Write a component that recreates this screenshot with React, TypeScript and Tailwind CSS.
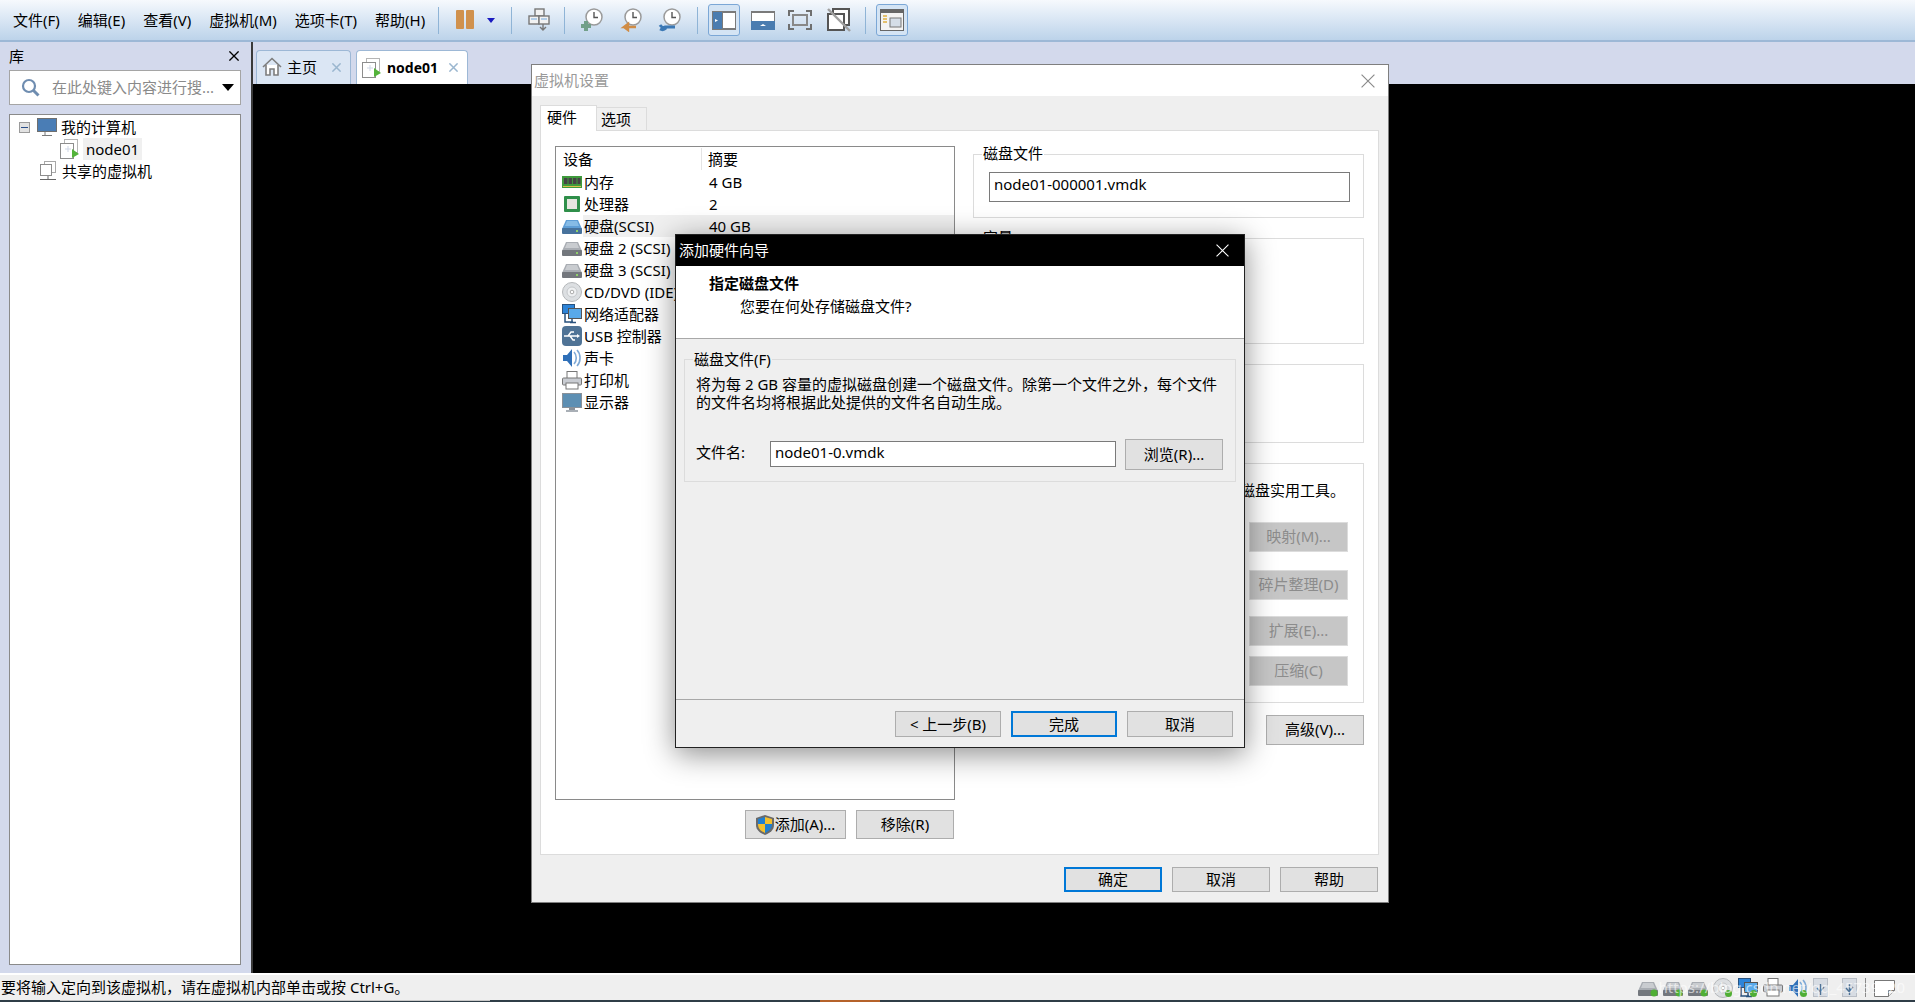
import type { ReactNode } from "react";

const FONT = "font-['Noto_Sans','Noto_Sans_CJK_SC',sans-serif]";

function Sep() {
  return <div className="w-px h-[27px] bg-[#8fb4d6]" />;
}

function Pause() {
  return (
    <svg width="18" height="20" viewBox="0 0 18 20">
      <rect x="0" y="0" width="8" height="19" rx="1" fill="#d0914d" />
      <rect x="10" y="0" width="8" height="19" rx="1" fill="#d0914d" />
    </svg>
  );
}

function SendKeys() {
  return (
    <svg width="22" height="24" viewBox="0 0 22 24" fill="#f2f2f2" stroke="#777" strokeWidth="1.4">
      <rect x="7" y="1" width="9" height="7" />
      <rect x="1" y="8" width="10" height="8" />
      <rect x="11" y="8" width="10" height="8" />
      <path d="M15 16v5M12 19l3 3 3-3" fill="none" />
      <path d="M3 11h6M13 11h6" stroke="#9cc0e4" />
    </svg>
  );
}

function Clock({ kind }: { kind: "add" | "back" | "tool" }) {
  return (
    <svg width="24" height="24" viewBox="0 0 24 24">
      <circle cx="14" cy="9" r="8" fill="#fff" stroke="#9a9a9a" strokeWidth="1.5" />
      <path d="M14 4v5.5h4" fill="none" stroke="#555" strokeWidth="1.4" />
      {kind === "add" && <path d="M6 13v10M1 18h10" stroke="#72a08a" strokeWidth="4" />}
      {kind === "back" && <path d="M17 19H5l4-3v6l-4-3" fill="#d08c45" stroke="#d08c45" strokeWidth="2.4" />}
      {kind === "tool" && <path d="M2 17c2 3 3 3 5 2h10M2 21c2 1 4 1 6-1" fill="none" stroke="#3b78b5" strokeWidth="3" />}
    </svg>
  );
}

function ViewIcon({ kind }: { kind: "side" | "bottom" | "full" | "off" | "tabs" }) {
  if (kind === "side")
    return (
      <svg width="24" height="19" viewBox="0 0 24 19">
        <rect width="24" height="19" fill="#7a7a7a" />
        <rect x="1" y="1" width="9" height="17" fill="#4a7cb0" />
        <rect x="11" y="2" width="12" height="15" fill="#fff" />
        <path d="M3 8l3 1.5L3 11z" fill="#fff" />
      </svg>
    );
  if (kind === "bottom")
    return (
      <svg width="24" height="19" viewBox="0 0 24 19">
        <rect width="24" height="19" fill="#7a7a7a" />
        <rect x="1" y="2" width="22" height="8" fill="#fff" />
        <rect x="0" y="10" width="24" height="9" fill="#4a7cb0" />
        <path d="M9 15l3-2 3 2z" fill="#fff" />
      </svg>
    );
  if (kind === "full")
    return (
      <svg width="24" height="20" viewBox="0 0 24 20" fill="none" stroke="#6f6f6f" strokeWidth="2">
        <rect x="5" y="5" width="14" height="10" stroke="#888" />
        <path d="M1 6V1h5M18 1h5v5M23 14v5h-5M6 19H1v-5" />
      </svg>
    );
  if (kind === "off")
    return (
      <svg width="24" height="24" viewBox="0 0 24 24">
        <rect x="6" y="1" width="16" height="16" fill="#fff" stroke="#555" strokeWidth="2" />
        <rect x="1" y="6" width="16" height="16" fill="#fff" stroke="#555" strokeWidth="2" />
        <path d="M1 1l22 22" stroke="#a0a0a0" strokeWidth="2.4" />
      </svg>
    );
  return (
    <svg width="24" height="22" viewBox="0 0 24 22">
      <rect x="0.5" y="0.5" width="23" height="21" fill="#f3f3f3" stroke="#666" />
      <rect width="24" height="4" fill="#666" />
      <path d="M3 7h4M3 10h4M3 13h4" stroke="#e0b040" strokeWidth="1.4" />
      <rect x="10" y="9" width="11" height="9" fill="#d5dee8" stroke="#777" />
    </svg>
  );
}

function HomeIcon() {
  return (
    <svg width="20" height="20" viewBox="0 0 20 20" fill="#fff" stroke="#7d7d7d" strokeWidth="1.6">
      <path d="M1 10L10 1.5 19 10" fill="none" />
      <path d="M4 8v10h4v-6h4v6h4V8" />
    </svg>
  );
}

function VmIcon() {
  return (
    <svg width="20" height="20" viewBox="0 0 20 20">
      <rect x="4.5" y="0.5" width="13" height="13" fill="#fff" stroke="#b5b5b5" />
      <rect x="0.5" y="4.5" width="13" height="15" fill="#fff" stroke="#8d8d8d" />
      <path d="M5 10h6M8 7v6" stroke="#cfd7e6" />
      <path d="M12 10l7 5-7 4z" fill="#53b33a" />
    </svg>
  );
}

function SharedIcon() {
  return (
    <svg width="20" height="20" viewBox="0 0 20 20">
      <rect x="5.5" y="0.5" width="11" height="11" fill="#fff" stroke="#a8a8a8" />
      <rect x="1.5" y="3.5" width="11" height="11" fill="#fff" stroke="#8d8d8d" />
      <path d="M9 15v3M1 18.5h16" stroke="#666" />
    </svg>
  );
}

function ComputerIcon() {
  return (
    <svg width="20" height="19" viewBox="0 0 20 19">
      <rect x="0.5" y="0.5" width="19" height="13" fill="#4a7db5" stroke="#6f6f6f" />
      <path d="M8 14v3M5 17.5h10" stroke="#7a7a7a" />
    </svg>
  );
}

function DiskIcon({ blue, led }: { blue?: boolean; led?: boolean }) {
  const top = blue ? "#5f9ed6" : "#a9adb3";
  return (
    <svg width="20" height="18" viewBox="0 0 20 18">
      <path d="M4 3h12l4 9H0z" fill={top} />
      <path d="M5 4h10l2 5H3z" fill={blue ? "#86bbe6" : "#c9ccd0"} />
      <rect x="0" y="11" width="20" height="6" rx="1" fill={blue ? "#47729c" : "#73777d"} />
      <rect x="14" y="13" width="2" height="2" fill="#8fd06a" />
      {led && <circle cx="16" cy="14" r="3.5" fill="#4fae35" />}
    </svg>
  );
}

function MemoryIcon() {
  return (
    <svg width="20" height="12" viewBox="0 0 20 12">
      <rect width="20" height="12" fill="#3f9a3c" />
      <rect x="2" y="2" width="3.5" height="6" fill="#444" />
      <rect x="6.5" y="2" width="3.5" height="6" fill="#444" />
      <rect x="11" y="2" width="3.5" height="6" fill="#444" />
      <rect x="15.5" y="2" width="3" height="6" fill="#444" />
      <path d="M1 10.5h18" stroke="#d8c04a" />
    </svg>
  );
}

function CpuIcon() {
  return (
    <svg width="16" height="16" viewBox="0 0 16 16">
      <rect width="16" height="16" rx="1" fill="#2f8f4a" />
      <rect x="3" y="3" width="10" height="10" fill="#e6e6e0" />
    </svg>
  );
}

function CdIcon({ led }: { led?: boolean }) {
  return (
    <svg width="20" height="20" viewBox="0 0 20 20">
      <circle cx="10" cy="10" r="9.5" fill="#dcdfe2" stroke="#b4b7ba" />
      <circle cx="10" cy="10" r="5" fill="#eef0f2" stroke="#c4c7ca" />
      <circle cx="10" cy="10" r="1.8" fill="#fff" stroke="#aaa" />
      {led && <circle cx="15.5" cy="15.5" r="3.5" fill="#4fae35" />}
    </svg>
  );
}

function NetIcon({ led }: { led?: boolean }) {
  return (
    <svg width="20" height="20" viewBox="0 0 20 20">
      <rect x="0.5" y="0.5" width="12" height="9" fill="#2d84d8" stroke="#29527e" />
      <rect x="6.5" y="4.5" width="13" height="10" fill="#58a9ea" stroke="#555" />
      <path d="M3 10v8h8M10 15v3M8 18.5h6" fill="none" stroke="#29527e" strokeWidth="1.5" />
      {led && <circle cx="15.5" cy="15.5" r="3.5" fill="#4fae35" />}
    </svg>
  );
}

function UsbIcon() {
  return (
    <svg width="20" height="20" viewBox="0 0 20 20">
      <rect width="20" height="20" rx="4" fill="#4f7396" />
      <path d="M2 10h14M6 10l3-4h3M8 10l3 4h2" fill="none" stroke="#fff" strokeWidth="1.4" />
      <path d="M15 8l3 2-3 2z" fill="#fff" />
    </svg>
  );
}

function SoundIcon({ led }: { led?: boolean }) {
  return (
    <svg width="20" height="20" viewBox="0 0 20 20">
      <path d="M1 7h4l5-6v18l-5-6H1z" fill="#2f6fb8" />
      <path d="M12 4c3 3 3 9 0 12M15 2c4 4 4 12 0 16" fill="none" stroke="#7fa9d6" strokeWidth="1.6" />
      {led && <circle cx="15.5" cy="15.5" r="3.5" fill="#4fae35" />}
    </svg>
  );
}

function PrinterIcon() {
  return (
    <svg width="20" height="19" viewBox="0 0 20 19">
      <rect x="5" y="0.5" width="10" height="7" fill="#fff" stroke="#777" />
      <rect x="0.5" y="7" width="19" height="7" rx="1" fill="#c9ccd2" stroke="#777" />
      <rect x="4" y="12" width="12" height="6" fill="#fff" stroke="#777" />
    </svg>
  );
}

function DisplayIcon() {
  return (
    <svg width="20" height="19" viewBox="0 0 20 19">
      <rect x="0.5" y="0.5" width="19" height="14" fill="#5d8fb3" stroke="#8a9199" />
      <rect x="7" y="15" width="6" height="2" fill="#8a9199" />
      <rect x="4" y="17" width="12" height="2" fill="#a9afb6" />
    </svg>
  );
}

function UsbStatus() {
  return (
    <svg width="15" height="19" viewBox="0 0 15 19">
      <rect x="0.5" y="0.5" width="14" height="18" fill="#d7dce3" stroke="#b9bec6" />
      <path d="M7.5 6v11M4 10l3.5 4M11 9l-3.5 4" stroke="#4f7396" strokeWidth="1.4" fill="none" />
    </svg>
  );
}

function NoteIcon() {
  return (
    <svg width="21" height="18" viewBox="0 0 21 18">
      <path d="M0.5 1.5h20v10l-6 6h-14z" fill="#fff" stroke="#777" />
      <path d="M14.5 17.5v-6h6" fill="#eee" stroke="#777" />
    </svg>
  );
}

function Shield() {
  return (
    <svg width="18" height="20" viewBox="0 0 18 20">
      <path d="M9 0l9 3v7c0 5-4 8-9 10-5-2-9-5-9-10V3z" fill="#6a6a6a" />
      <path d="M9 2L2 4v5h7zM9 9v9c4-2 7-4 7-9z" fill="#1f7fd0" />
      <path d="M9 2l7 2v5H9zM9 9v9c-4-2-7-4-7-9z" fill="#f3c02d" />
    </svg>
  );
}

function CloseX({ color, size = 12, weight = 1 }: { color: string; size?: number; weight?: number }) {
  return (
    <svg width={size} height={size} viewBox="0 0 12 12" stroke={color} strokeWidth={weight} fill="none">
      <path d="M0.5 0.5l11 11M11.5 0.5l-11 11" />
    </svg>
  );
}

function Btn({ children, className }: { children: ReactNode; className: string }) {
  return (
    <button className={`flex items-center justify-center border text-[15px] leading-none ${className}`}>
      {children}
    </button>
  );
}

const normalBtn = "bg-[#e1e1e1] text-black border-[#adadad]";
const defaultBtn = "bg-[#e1e1e1] text-black border-2 border-[#0078d7]";
const disabledBtn = "bg-[#c6c6c6] text-[#8c8c8c] border-[#dcdcdc] pb-[2px]";

function GroupBox({ label, className, children }: { label?: string; className: string; children?: ReactNode }) {
  return (
    <div className={`relative border border-[#dcdcdc] ${className}`}>
      {label && <span className="absolute left-[8px] top-[-12px] bg-white px-[1px] text-[15px] leading-[20px] text-black">{label}</span>}
      {children}
    </div>
  );
}

const devices: { icon: ReactNode; name: string; value?: string; selected?: boolean }[] = [
  { icon: <MemoryIcon />, name: "内存", value: "4 GB" },
  { icon: <CpuIcon />, name: "处理器", value: "2" },
  { icon: <DiskIcon blue />, name: "硬盘(SCSI)", value: "40 GB", selected: true },
  { icon: <DiskIcon />, name: "硬盘 2 (SCSI)" },
  { icon: <DiskIcon />, name: "硬盘 3 (SCSI)" },
  { icon: <CdIcon />, name: "CD/DVD (IDE)" },
  { icon: <NetIcon />, name: "网络适配器" },
  { icon: <UsbIcon />, name: "USB 控制器" },
  { icon: <SoundIcon />, name: "声卡" },
  { icon: <PrinterIcon />, name: "打印机" },
  { icon: <DisplayIcon />, name: "显示器" },
];

function SettingsWindow() {
  return (
    <div className="absolute left-[531px] top-[64px] flex h-[839px] w-[858px] flex-col border border-[#7f7f7f] bg-[#efefef] text-[15px] text-black">
      <div className="flex h-[31px] items-center justify-between bg-white pl-[2px] pr-[13px] text-[#9a9a9a]">
        <span>虚拟机设置</span>
        <CloseX color="#8a8a8a" size={14} />
      </div>
      <div className="ml-[8px] mt-[9px] flex h-[25px] items-end">
        <div className="z-10 mb-[-1px] flex h-[26px] w-[57px] items-center border border-b-0 border-[#dcdcdc] bg-white pb-[2px] pl-[6px]">硬件</div>
        <div className="flex h-[23px] w-[50px] items-center border border-l-0 border-b-0 border-[#dcdcdc] bg-[#f0f0f0] pl-[4px]">选项</div>
      </div>
      <div className="ml-[8px] flex h-[725px] w-[839px] gap-[18px] border border-[#dcdcdc] bg-white pl-[14px] pt-[15px]">
        <div className="flex w-[400px] flex-col">
          <div className="h-[654px] border border-[#8a8a8a] bg-white">
            <div className="flex h-[24px] items-center">
              <span className="w-[146px] border-r border-[#e4e4e4] pl-[7px]">设备</span>
              <span className="pl-[6px]">摘要</span>
            </div>
            {devices.map((d) => (
              <div key={d.name} className="flex h-[22px] items-center leading-none">
                <span className="flex w-[27px] shrink-0 justify-center pl-[4px]">{d.icon}</span>
                <span className={`flex h-full flex-1 items-center ${d.selected ? "bg-[#f0f0f0]" : ""}`}>
                  <span className="w-[126px] whitespace-nowrap pl-[1px]">{d.name}</span>
                  {d.value && <span>{d.value}</span>}
                </span>
              </div>
            ))}
          </div>
          <div className="mt-[10px] flex justify-end gap-[10px] pr-[1px]">
            <Btn className={`h-[29px] w-[101px] gap-[1px] ${normalBtn}`}>
              <Shield />
              添加(A)...
            </Btn>
            <Btn className={`h-[29px] w-[98px] ${normalBtn}`}>移除(R)</Btn>
          </div>
        </div>
        <div className="flex w-[391px] flex-col pt-[8px]">
          <GroupBox label="磁盘文件" className="h-[64px] pl-[15px] pt-[17px]">
            <div className="flex h-[30px] w-[361px] items-center border border-[#7a7a7a] pb-[6px] pl-[4px] leading-none">node01-000001.vmdk</div>
          </GroupBox>
          <GroupBox label="容量" className="mt-[20px] h-[106px]" />
          <GroupBox className="mt-[20px] h-[79px]" />
          <GroupBox className="mt-[20px] flex h-[240px] flex-col items-end pr-[15px] pt-[16px]">
            <span className="mr-[3px] h-[20px] leading-[20px]">磁盘实用工具。</span>
            <Btn className={`mt-[22px] h-[30px] w-[99px] ${disabledBtn}`}>映射(M)...</Btn>
            <Btn className={`mt-[18px] h-[30px] w-[99px] ${disabledBtn}`}>碎片整理(D)</Btn>
            <Btn className={`mt-[16px] h-[30px] w-[99px] ${disabledBtn}`}>扩展(E)...</Btn>
            <Btn className={`mt-[10px] h-[30px] w-[99px] ${disabledBtn}`}>压缩(C)</Btn>
          </GroupBox>
          <div className="mt-[12px] flex justify-end">
            <Btn className={`h-[30px] w-[98px] pb-[1px] ${normalBtn}`}>高级(V)...</Btn>
          </div>
        </div>
      </div>
      <div className="mr-[10px] mt-[12px] flex justify-end gap-[10px]">
        <Btn className={`h-[25px] w-[98px] ${defaultBtn}`}>确定</Btn>
        <Btn className={`h-[25px] w-[98px] ${normalBtn}`}>取消</Btn>
        <Btn className={`h-[25px] w-[98px] ${normalBtn}`}>帮助</Btn>
      </div>
    </div>
  );
}

function Wizard() {
  return (
    <div className="absolute left-[675px] top-[234px] flex h-[514px] w-[570px] flex-col border border-[#222] bg-[#efefef] text-[15px] text-black shadow-[0_6px_28px_rgba(0,0,0,0.45)]">
      <div className="flex h-[31px] items-center justify-between bg-black pl-[3px] pr-[15px] text-white">
        <span>添加硬件向导</span>
        <CloseX color="#fff" size={13} />
      </div>
      <div className="h-[73px] border-b border-[#a8a8a8] bg-white pl-[33px] pt-[6px]">
        <div className="h-[23px] font-bold leading-[23px]">指定磁盘文件</div>
        <div className="pl-[31px] leading-[23px]">您要在何处存储磁盘文件?</div>
      </div>
      <div className="relative mx-[8px] mt-[20px] h-[123px] border border-[#dcdcdc] pl-[11px] pr-[10px] pt-[15px]">
        <span className="absolute left-[8px] top-[-11px] bg-[#efefef] px-[1px] leading-[20px]">磁盘文件(F)</span>
        <p className="leading-[18px]">将为每 2 GB 容量的虚拟磁盘创建一个磁盘文件。除第一个文件之外，每个文件</p>
        <p className="leading-[18px]">的文件名均将根据此处提供的文件名自动生成。</p>
        <div className="mt-[28px] flex items-center">
          <span className="mb-[4px] w-[74px]">文件名:</span>
          <div className="mb-[2px] flex h-[26px] w-[346px] items-center border border-[#7a7a7a] bg-white pb-[2px] pl-[4px] leading-none">node01-0.vmdk</div>
          <Btn className={`ml-[9px] h-[31px] w-[98px] ${normalBtn}`}>浏览(R)...</Btn>
        </div>
      </div>
      <div className="mt-[217px] flex h-[48px] justify-end gap-[10px] border-t border-[#a8a8a8] pr-[11px] pt-[11px]">
        <Btn className={`h-[26px] w-[106px] ${normalBtn}`}>&lt; 上一步(B)</Btn>
        <Btn className={`h-[26px] w-[106px] ${defaultBtn}`}>完成</Btn>
        <Btn className={`h-[26px] w-[106px] ${normalBtn}`}>取消</Btn>
      </div>
    </div>
  );
}

export default function App() {
  const menus = ["文件(F)", "编辑(E)", "查看(V)", "虚拟机(M)", "选项卡(T)", "帮助(H)"];
  return (
    <div className={`relative flex h-[1002px] w-[1915px] flex-col overflow-hidden bg-[#d3d9ec] text-[15px] text-black ${FONT}`}>
      <div className="flex h-[42px] shrink-0 items-center border-b-2 border-[#9db8d6] bg-gradient-to-b from-[#f6f9fd] to-[#bcd3ea] pl-[13px]">
        <div className="flex gap-[18px]">
          {menus.map((m) => (
            <span key={m} className="whitespace-nowrap">{m}</span>
          ))}
        </div>
        <div className="ml-[13px] flex items-center">
          <Sep />
          <span className="ml-[17px]"><Pause /></span>
          <span className="ml-[13px] h-0 w-0 border-x-[4px] border-t-[5px] border-x-transparent border-t-[#1a1ac0]" />
          <span className="ml-[16px]"><Sep /></span>
          <span className="ml-[16px]"><SendKeys /></span>
          <span className="ml-[14px]"><Sep /></span>
          <span className="ml-[15px]"><Clock kind="add" /></span>
          <span className="ml-[15px]"><Clock kind="back" /></span>
          <span className="ml-[15px]"><Clock kind="tool" /></span>
          <span className="ml-[15px]"><Sep /></span>
          <span className="ml-[10px] flex h-[32px] w-[32px] items-center justify-center rounded-[3px] border border-[#7ba7d6] bg-[#d4e4f4]"><ViewIcon kind="side" /></span>
          <span className="ml-[11px]"><ViewIcon kind="bottom" /></span>
          <span className="ml-[13px]"><ViewIcon kind="full" /></span>
          <span className="ml-[15px]"><ViewIcon kind="off" /></span>
          <span className="ml-[14px]"><Sep /></span>
          <span className="ml-[10px] flex h-[32px] w-[32px] items-center justify-center rounded-[3px] border border-[#7ba7d6] bg-[#d4e4f4]"><ViewIcon kind="tabs" /></span>
        </div>
      </div>

      <div className="flex min-h-0 flex-1">
        <div className="flex w-[251px] shrink-0 flex-col pl-[9px] pr-[10px]">
          <div className="flex h-[28px] items-center justify-between pr-[2px]">
            <span>库</span>
            <CloseX color="#000" size={10} weight={1.6} />
          </div>
          <div className="flex h-[35px] items-center border border-[#a5a5a5] bg-white pl-[11px] pr-[6px]">
            <svg width="19" height="19" viewBox="0 0 19 19" fill="none" stroke="#6f8db0" strokeWidth="2.2">
              <circle cx="8" cy="8" r="6" />
              <path d="M12.5 12.5l5 5" strokeWidth="3" />
            </svg>
            <span className="ml-[12px] flex-1 whitespace-nowrap text-[#8a8a8a]">在此处键入内容进行搜...</span>
            <span className="h-0 w-0 border-x-[6px] border-t-[7px] border-x-transparent border-t-black" />
          </div>
          <div className="mt-[9px] h-[851px] border border-[#8a8a8a] bg-white pt-[1px]">
            <div className="flex h-[22px] items-center pl-[9px]">
              <span className="flex h-[11px] w-[11px] items-center justify-center border border-[#9a9a9a] bg-[#e2e2e2]">
                <span className="h-px w-[7px] bg-[#2b4f8a]" />
              </span>
              <span className="ml-[7px]"><ComputerIcon /></span>
              <span className="ml-[4px]">我的计算机</span>
            </div>
            <div className="flex h-[22px] items-center pl-[50px]">
              <VmIcon />
              <span className="ml-[3px] flex h-[22px] items-center bg-[#f0f0f0] px-[3px]">node01</span>
            </div>
            <div className="flex h-[22px] items-center pl-[29px]">
              <SharedIcon />
              <span className="ml-[3px]">共享的虚拟机</span>
            </div>
          </div>
        </div>

        <div className="flex flex-1 flex-col border-l-2 border-[#3a3a3a]">
          <div className="flex h-[42px] items-end gap-[5px] pl-[3px]">
            <div className="flex h-[34px] w-[95px] items-center rounded-t-[4px] border border-b-0 border-[#9db8d6] bg-[#dbe6f4] pb-[1px] pl-[5px] pr-[9px]">
              <HomeIcon />
              <span className="ml-[5px] flex-1">主页</span>
              <CloseX color="#9ab6cf" size={9} weight={2} />
            </div>
            <div className="flex h-[34px] w-[112px] items-center rounded-t-[4px] border border-b-0 border-[#9db8d6] bg-white pl-[5px] pr-[9px]">
              <VmIcon />
              <span className="ml-[5px] flex-1 text-[14px] font-bold">node01</span>
              <CloseX color="#9ab6cf" size={9} weight={2} />
            </div>
          </div>
          <div className="flex-1 bg-black" />
        </div>
      </div>

      <div className="h-[2px] shrink-0 bg-white" />
      <div className="relative flex h-[25px] shrink-0 items-center justify-between bg-[#efefef] pr-[20px]">
        <span className="whitespace-nowrap pl-[1px]">要将输入定向到该虚拟机，请在虚拟机内部单击或按 Ctrl+G。</span>
        <div className="flex items-center gap-[5px]">
          <DiskIcon led />
          <DiskIcon led />
          <DiskIcon led />
          <CdIcon led />
          <NetIcon led />
          <PrinterIcon />
          <SoundIcon led />
          <UsbStatus />
          <span className="ml-[9px]"><UsbStatus /></span>
          <span className="mx-[3px] h-[19px] w-px bg-[#8a8a8a]" />
          <NoteIcon />
        </div>
        <span className="absolute right-[10px] top-[1px] whitespace-nowrap text-[15px] leading-[22px] text-white/60">https://blog.csdn.net/qq_45739020</span>
      </div>
      <div className="flex h-[2px] shrink-0 bg-[#2f3d47]">
        <div className="ml-[60px] h-px w-[430px] bg-[#c8c8c8]" />
        <div className="ml-[330px] w-[60px] bg-[#b5622a]" />
      </div>

      <SettingsWindow />
      <Wizard />
    </div>
  );
}
